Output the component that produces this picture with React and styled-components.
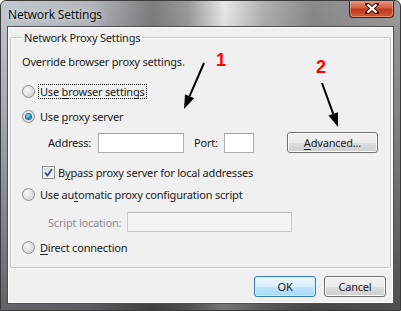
import styled, { createGlobalStyle, css } from "styled-components";

const GlobalStyle = createGlobalStyle`
  html, body {
    margin: 0;
    padding: 0;
    background: #ffffff;
  }
  body {
    font-family: "Noto Sans", "Open Sans", sans-serif;
    font-size: 11px;
    letter-spacing: -0.2px;
    color: #1b1b1b;
  }
`;

const Window = styled.div`
  position: relative;
  width: 401px;
  height: 311px;
  box-sizing: border-box;
  display: flex;
  flex-direction: column;
  border: 1px solid #3a3a3a;
  border-radius: 6px 6px 0 0;
  background:
    linear-gradient(to bottom, rgba(0, 0, 0, 0) 0%, rgba(0, 0, 0, 0.15) 35%, rgba(0, 0, 0, 0.5) 100%),
    linear-gradient(
      to right,
      #c3c9cf 0%,
      #b4b8bc 22%,
      #7d7d7d 38%,
      #9c9c9c 47%,
      #e8e8e8 56%,
      #b0b0b0 66%,
      #8a8a8a 78%,
      #9c9c9c 100%
    );
  overflow: hidden;
`;

const TitleBar = styled.div`
  height: 25px;
  display: flex;
  justify-content: space-between;
  align-items: flex-start;
  padding-left: 7px;
`;

const Title = styled.div`
  margin-top: 5px;
  font-size: 12px;
  color: #111;
  text-shadow: 0 0 6px rgba(255, 255, 255, 0.9);
`;

const CloseButton = styled.div`
  width: 45px;
  height: 18px;
  margin-top: -1px;
  margin-right: 6px;
  border: 1px solid #4a1a12;
  border-top: none;
  border-radius: 0 0 4px 4px;
  box-sizing: border-box;
  display: flex;
  align-items: center;
  justify-content: center;
  background: linear-gradient(to bottom, #e8a08c 0%, #d4603e 45%, #c0381c 55%, #d45a30 100%);
  box-shadow: inset 0 0 0 1px rgba(255, 255, 255, 0.35);
`;

const Client = styled.div`
  flex: 1;
  margin: 0 6px 6px;
  display: flex;
  flex-direction: column;
  background: #f0f0f0;
  border: 1px solid #4f4f4f;
  box-shadow: inset 0 0 0 1px #ffffff;
  padding: 3px 2px 6px 2px;
`;

const GroupBox = styled.fieldset`
  margin: 0;
  padding: 0 12px 12px 11px;
  border: 1px solid #c5c5c5;
  border-radius: 2px;
  box-shadow: inset 1px 1px 0 #ffffff, 1px 1px 0 #ffffff;
  display: flex;
  flex-direction: column;
  min-width: 0;
`;

const Legend = styled.legend`
  padding: 0 2px;
  margin-left: 0;
  line-height: 15px;
`;

const Row = styled.div`
  display: flex;
  align-items: center;
  height: ${(p) => p.$h || 16}px;
  margin-top: ${(p) => p.$top || 0}px;
  padding-left: ${(p) => p.$indent || 0}px;
  white-space: nowrap;
`;

const Text = styled.span`
  color: ${(p) => (p.$disabled ? "#8d8d8d" : "#1b1b1b")};
  line-height: 13px;
  ${(p) =>
    p.$focus &&
    css`
      outline: 1px dotted #000;
      outline-offset: 0;
      padding: 0 1px;
      margin-left: -1px;
    `}
`;

const U = styled.span`
  text-decoration: underline;
  text-underline-offset: 2px;
`;

const Radio = styled.span`
  width: 13px;
  height: 13px;
  box-sizing: border-box;
  border-radius: 50%;
  border: 1px solid #8e8f8f;
  background: radial-gradient(circle at 40% 35%, #f8f8f8 0%, #dcdcdc 60%, #cfcfcf 100%);
  margin-right: 5px;
  flex-shrink: 0;
  display: flex;
  align-items: center;
  justify-content: center;

  &::after {
    content: "";
    display: ${(p) => (p.$checked ? "block" : "none")};
    width: 5px;
    height: 5px;
    border-radius: 50%;
    background: radial-gradient(circle at 40% 35%, #a7e1ff 0%, #1f86c8 55%, #0a4f8a 100%);
    box-shadow: 0 0 0 1px #2a6a9c;
  }
`;

const Checkbox = styled.span`
  width: 13px;
  height: 13px;
  box-sizing: border-box;
  border: 1px solid #8e8f8f;
  background: linear-gradient(135deg, #dcdcdc 0%, #f6f6f6 100%);
  box-shadow: inset 0 0 0 1px #f4f4f4;
  margin-right: 3px;
  flex-shrink: 0;
  display: flex;
  align-items: center;
  justify-content: center;
`;

const Label = styled.span`
  color: ${(p) => (p.$disabled ? "#8d8d8d" : "#1b1b1b")};
  margin-right: ${(p) => p.$gap || 6}px;
`;

const Input = styled.div`
  width: ${(p) => p.$w}px;
  height: 20px;
  box-sizing: border-box;
  border: 1px solid ${(p) => (p.$disabled ? "#c9c9c9" : "#abadb3")};
  border-top-color: ${(p) => (p.$disabled ? "#bcbcbc" : "#9ea0a6")};
  background: ${(p) => (p.$disabled ? "#f4f4f4" : "#ffffff")};
  margin-right: ${(p) => p.$gap || 0}px;
`;

const Button = styled.div`
  width: ${(p) => p.$w}px;
  height: 21px;
  box-sizing: border-box;
  border-radius: 3px;
  display: flex;
  align-items: center;
  justify-content: center;
  color: #1b1b1b;
  ${(p) =>
    p.$default
      ? css`
          border: 1px solid #3c7fb1;
          background: linear-gradient(to bottom, #eaf6fd 0%, #d9f0fc 50%, #bee6fd 51%, #a7d9f5 100%);
          box-shadow: inset 0 0 0 1px #c8ecff;
        `
      : css`
          border: 1px solid #707070;
          background: linear-gradient(to bottom, #f2f2f2 0%, #ebebeb 50%, #dddddd 51%, #cfcfcf 100%);
          box-shadow: inset 0 0 0 1px #fbfbfb;
        `}
`;

const Spacer = styled.div`
  flex: 1;
`;

const Footer = styled.div`
  display: flex;
  justify-content: flex-end;
  gap: 8px;
  margin-top: auto;
  padding-right: 5px;
`;

const Overlay = styled.svg`
  position: absolute;
  left: 0;
  top: 0;
  pointer-events: none;
`;

function Check() {
  return (
    <svg width="9" height="9" viewBox="0 0 9 9">
      <path d="M1 4.5 L3.5 7.5 L8 1" fill="none" stroke="#3c4f8c" strokeWidth="1.8" />
    </svg>
  );
}

function Arrow({ x1, y1, x2, y2 }) {
  const a = Math.atan2(y2 - y1, x2 - x1);
  const len = 14;
  const w = 5;
  const bx = x2 - len * Math.cos(a);
  const by = y2 - len * Math.sin(a);
  const px = -Math.sin(a) * w;
  const py = Math.cos(a) * w;
  return (
    <g>
      <line x1={x1} y1={y1} x2={bx} y2={by} stroke="#000" strokeWidth="2" />
      <polygon points={`${x2},${y2} ${bx + px},${by + py} ${bx - px},${by - py}`} fill="#000" />
    </g>
  );
}

export default function App() {
  return (
    <>
      <GlobalStyle />
      <Window>
        <TitleBar>
          <Title>Network Settings</Title>
          <CloseButton>
            <svg width="14" height="11" viewBox="0 0 14 11">
              <path
                d="M2 1 L12 10 M12 1 L2 10"
                stroke="#3a1208"
                strokeWidth="4"
                strokeLinecap="square"
              />
              <path d="M2.5 1.5 L11.5 9.5 M11.5 1.5 L2.5 9.5" stroke="#ffffff" strokeWidth="2.2" />
            </svg>
          </CloseButton>
        </TitleBar>
        <Client>
          <GroupBox>
            <Legend>Network Proxy Settings</Legend>
            <Row $top={8}>
              <Text>Override browser proxy settings.</Text>
            </Row>
            <Row $top={14}>
              <Radio />
              <Text $focus>
                Use <U>b</U>rowser settings
              </Text>
            </Row>
            <Row $top={9}>
              <Radio $checked />
              <Text>
                Use <U>p</U>roxy server
              </Text>
            </Row>
            <Row $top={8} $h={21} $indent={26}>
              <Label $gap={7}>Address:</Label>
              <Input $w={86} $gap={10} />
              <Label $gap={6}>Port:</Label>
              <Input $w={30} />
              <Spacer />
              <Button $w={91}>
                <span>
                  <U>A</U>dvanced...
                </span>
              </Button>
            </Row>
            <Row $top={11} $indent={20}>
              <Checkbox>
                <Check />
              </Checkbox>
              <Text>
                B<U>y</U>pass proxy server for local addresses
              </Text>
            </Row>
            <Row $top={6}>
              <Radio />
              <Text>
                Use au<U>t</U>omatic proxy configuration script
              </Text>
            </Row>
            <Row $top={10} $h={20} $indent={26}>
              <Label $disabled $gap={6}>
                Script location:
              </Label>
              <Input $disabled $w={165} />
            </Row>
            <Row $top={7}>
              <Radio />
              <Text>
                <U>D</U>irect connection
              </Text>
            </Row>
          </GroupBox>
          <Footer>
            <Button $w={62} $default>
              OK
            </Button>
            <Button $w={62}>Cancel</Button>
          </Footer>
        </Client>
        <Overlay width="401" height="311" viewBox="0 0 401 311">
          <text x="215" y="65" fontFamily="Liberation Sans, Arial, sans-serif" fontWeight="bold" fontSize="18" fill="#ff0000">
            1
          </text>
          <text x="315" y="72" fontFamily="Liberation Sans, Arial, sans-serif" fontWeight="bold" fontSize="18" fill="#ff0000">
            2
          </text>
          <Arrow x1={203} y1={62} x2={183} y2={108} />
          <Arrow x1={321} y1={82} x2={337} y2={126} />
        </Overlay>
      </Window>
    </>
  );
}
